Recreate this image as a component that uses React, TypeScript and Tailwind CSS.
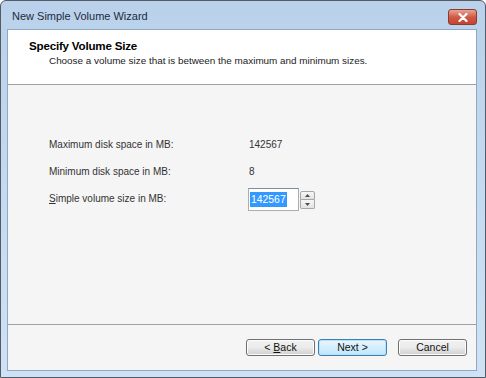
import React from "react";

function WinButton({
  children,
  primary = false,
}: {
  children: React.ReactNode;
  primary?: boolean;
}) {
  return (
    <button
      className={
        primary
          ? "w-[69px] h-[17px] rounded-[3px] border border-[#3c7fb1] bg-gradient-to-b from-[#eaf6fd] to-[#bee6fd] text-[10.5px] text-[#111] shadow-[inset_0_0_0_1px_#b6e3f9] leading-none"
          : "w-[69px] h-[17px] rounded-[3px] border border-[#707070] bg-gradient-to-b from-[#f2f2f2] via-[#ebebeb] to-[#cfcfcf] text-[10.5px] text-[#111] shadow-[inset_0_0_0_1px_#fcfcfc] leading-none"
      }
    >
      {children}
    </button>
  );
}

export default function App() {
  return (
    <div
      className="w-[486px] h-[378px] bg-gradient-to-b from-[#b9d1ea] via-[#c4daf0] to-[#cfe2f5] border border-[#555b63] rounded-t-[6px] flex flex-col overflow-hidden"
      style={{ fontFamily: '"Liberation Sans", Arial, sans-serif' }}
    >
      {/* title bar */}
      <div className="h-[28px] flex items-start justify-between pl-[11px] pr-[8px]">
        <span className="mt-[10px] text-[11px] text-[#1e2b3c] leading-none">
          New Simple Volume Wizard
        </span>
        <div className="mt-[8px] w-[29px] h-[16px] rounded-[3px] border border-[#8a3b2e] bg-gradient-to-b from-[#e8a494] via-[#d05a45] to-[#c24530] flex items-center justify-center">
          <svg width="10" height="9" viewBox="0 0 10 9">
            <path
              d="M1.5 1 L8.5 8 M8.5 1 L1.5 8"
              stroke="#ffffff"
              strokeWidth="2.2"
              strokeLinecap="round"
            />
          </svg>
        </div>
      </div>

      {/* client area */}
      <div className="ml-[6px] mr-[8px] h-[342px] flex flex-col border border-[#8fa8c6] bg-[#f5f5f5]">
        {/* header */}
        <div className="h-[55px] bg-white border-b border-[#a0a0a0] pl-[21px] pt-[10px]">
          <div className="text-[11.6px] font-bold text-black leading-none tracking-[-0.2px]">
            Specify Volume Size
          </div>
          <div className="mt-[4px] pl-[20px] text-[9.9px] text-[#222] leading-none">
            Choose a volume size that is between the maximum and minimum sizes.
          </div>
        </div>

        {/* body */}
        <div className="flex-1 pl-[41px] pt-[52px] text-[10px] text-[#333]">
          <div className="flex items-center h-[14px]">
            <span className="w-[200px]">Maximum disk space in MB:</span>
            <span>142567</span>
          </div>
          <div className="flex items-center h-[14px] mt-[13px]">
            <span className="w-[200px]">Minimum disk space in MB:</span>
            <span>8</span>
          </div>
          <div className="flex items-start mt-[10px]">
            <span className="w-[199px] mt-[3px]">
              <span className="underline">S</span>imple volume size in MB:
            </span>
            <div className="flex">
              <div className="w-[51px] h-[23px] border border-[#abadb3] border-t-[#7a8ea8] bg-white pl-[1px] pt-[3px]">
                <span className="bg-[#3399ff] text-white text-[10.4px] px-[1px] leading-[15px] inline-block">
                  142567
                </span>
              </div>
              <div className="ml-[1px] mt-[3px] flex flex-col w-[15px]">
                <div className="h-[9px] border border-[#a7a7a7] rounded-t-[2px] bg-gradient-to-b from-[#f7f7f7] to-[#e2e2e2] flex items-center justify-center">
                  <svg width="5" height="3" viewBox="0 0 5 3">
                    <path d="M0 3 L2.5 0 L5 3 Z" fill="#4d4d4d" />
                  </svg>
                </div>
                <div className="h-[9px] border border-t-0 border-[#a7a7a7] rounded-b-[2px] bg-gradient-to-b from-[#f7f7f7] to-[#e2e2e2] flex items-center justify-center">
                  <svg width="5" height="3" viewBox="0 0 5 3">
                    <path d="M0 0 L2.5 3 L5 0 Z" fill="#4d4d4d" />
                  </svg>
                </div>
              </div>
            </div>
          </div>
        </div>

        {/* footer */}
        <div className="h-[46px] border-t border-[#a0a0a0] flex items-start justify-end pr-[9px] pt-[14px] gap-[3px]">
          <WinButton>
            &lt; <span className="underline">B</span>ack
          </WinButton>
          <WinButton primary>Next &gt;</WinButton>
          <div className="w-[5px]" />
          <WinButton>Cancel</WinButton>
        </div>
      </div>
    </div>
  );
}
